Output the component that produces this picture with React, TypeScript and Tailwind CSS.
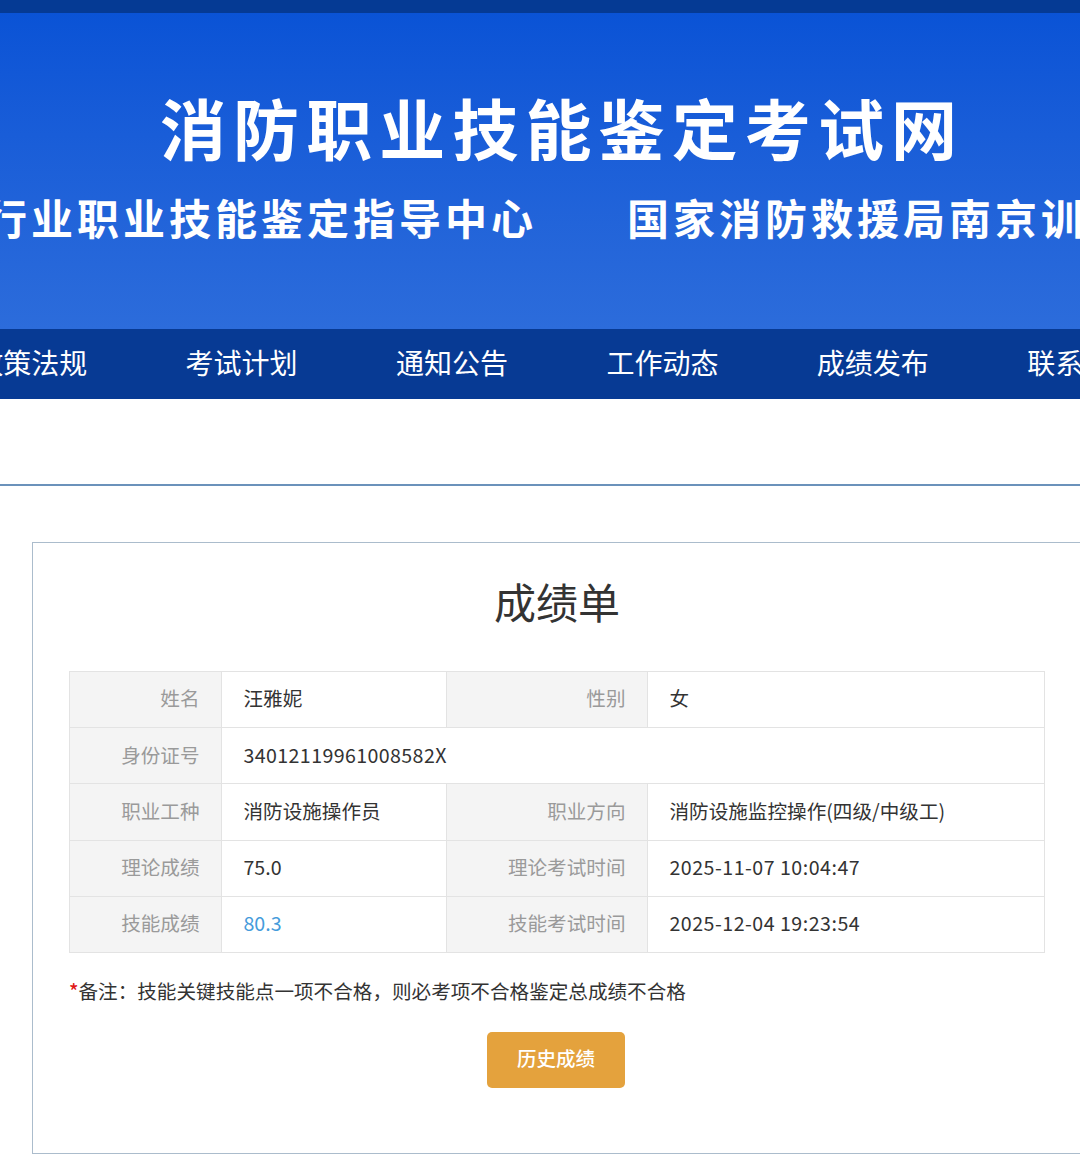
import type { ReactNode } from 'react';

const nav = ['政策法规', '考试计划', '通知公告', '工作动态', '成绩发布', '联系我们'];

function Label({ children }: { children: ReactNode }) {
  return <div className="flex items-center justify-end border-r border-b border-[#e3e3e3] bg-[#f4f4f4] pr-[21.5px] pb-[3px] text-[#9a9a9a]">{children}</div>;
}

function Value({ children, className = '' }: { children: ReactNode; className?: string }) {
  return <div className={`flex items-center border-r border-b border-[#e3e3e3] pl-[21.5px] pb-[3px] ${className}`}>{children}</div>;
}

export default function App() {
  return (
    <div className="h-[1176px] w-[1080px] overflow-hidden bg-white font-['Noto_Sans_CJK_SC',sans-serif] text-[#333]">
      <div className="h-[13px] bg-[#053a94]" />
      <header className="flex h-[316px] flex-col overflow-hidden bg-linear-to-b from-[#0a53d6] to-[#2c6cdb] whitespace-nowrap text-white">
        <h1 className="mt-[77px] ml-[160px] text-[66px] leading-[72px] font-bold tracking-[7.1px]">消防职业技能鉴定考试网</h1>
        <div className="mt-[25px] ml-[-15px] flex text-[42px] leading-[60px] font-bold tracking-[4px]">
          <span className="w-[642px] shrink-0">行业职业技能鉴定指导中心</span>
          <span>国家消防救援局南京训练总队</span>
        </div>
      </header>
      <nav className="flex h-[70px] bg-[#073a94] text-[28px] leading-[66px] whitespace-nowrap text-white">
        {nav.map((item) => (
          <span key={item} className="w-[210.4px] shrink-0 first:ml-[-24.8px]">{item}</span>
        ))}
      </nav>
      <div className="h-[87px] border-b-2 border-[#6b92bb]" />
      <main className="mt-[56px] ml-[32px] h-[612px] w-[1080px] border border-[#abbccc] pl-[36px]">
        <h2 className="mt-[27px] w-[976px] text-center text-[42px] leading-[62px]">成绩单</h2>
        <div className="mt-[39px] grid w-[976px] grid-cols-[152px_225px_201px_397px] grid-rows-[repeat(5,56.2px)] border-t border-l border-[#e3e3e3] text-[19.6px]">
          <Label>姓名</Label><Value>汪雅妮</Value><Label>性别</Label><Value>女</Value>
          <Label>身份证号</Label><Value className="col-span-3 tracking-[0.4px]">34012119961008582X</Value>
          <Label>职业工种</Label><Value>消防设施操作员</Value><Label>职业方向</Label><Value>消防设施监控操作(四级/中级工)</Value>
          <Label>理论成绩</Label><Value>75.0</Value><Label>理论考试时间</Label><Value className="tracking-[0.5px]">2025-11-07 10:04:47</Value>
          <Label>技能成绩</Label><Value className="text-[#459bdb]">80.3</Value><Label>技能考试时间</Label><Value className="tracking-[0.5px]">2025-12-04 19:23:54</Value>
        </div>
        <p className="mt-[23px] text-[19.6px] leading-[30px]"><span className="font-medium text-[#e01818]">*</span>备注：技能关键技能点一项不合格，则必考项不合格鉴定总成绩不合格</p>
        <button className="mt-[26px] ml-[418px] block h-[56px] w-[138px] rounded-[5px] bg-[#e4a23d] pb-[5px] text-[19.5px] font-medium text-white">历史成绩</button>
      </main>
    </div>
  );
}
